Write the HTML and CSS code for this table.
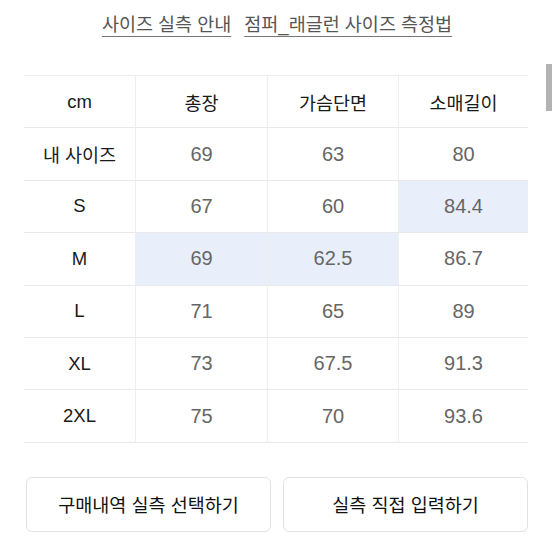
FILE: index.html
```html
<!DOCTYPE html>
<html lang="ko">
<head>
<meta charset="utf-8">
<link rel="stylesheet" href="styles.css">
</head>
<body>
<div class="page">
  <div class="links">
    <a class="link">사이즈 실측 안내</a>
    <a class="link">점퍼_래글런 사이즈 측정법</a>
  </div>
  <div class="table">
    <div class="cell head">cm</div>
    <div class="cell head">총장</div>
    <div class="cell head">가슴단면</div>
    <div class="cell head">소매길이</div>

    <div class="cell label">내 사이즈</div>
    <div class="cell">69</div>
    <div class="cell">63</div>
    <div class="cell">80</div>

    <div class="cell label">S</div>
    <div class="cell">67</div>
    <div class="cell">60</div>
    <div class="cell hl">84.4</div>

    <div class="cell label">M</div>
    <div class="cell hl">69</div>
    <div class="cell hl">62.5</div>
    <div class="cell">86.7</div>

    <div class="cell label">L</div>
    <div class="cell">71</div>
    <div class="cell">65</div>
    <div class="cell">89</div>

    <div class="cell label">XL</div>
    <div class="cell">73</div>
    <div class="cell">67.5</div>
    <div class="cell">91.3</div>

    <div class="cell label">2XL</div>
    <div class="cell">75</div>
    <div class="cell">70</div>
    <div class="cell">93.6</div>
  </div>
  <div class="buttons">
    <button class="btn">구매내역 실측 선택하기</button>
    <button class="btn">실측 직접 입력하기</button>
  </div>
</div>
<div class="scrollbar"></div>
</body>
</html>
```
FILE: styles.css
```css
html, body {
  margin: 0;
  padding: 0;
  background: #fff;
}
body {
  font-family: "Liberation Sans", "Noto Sans CJK KR", sans-serif;
  width: 553px;
  height: 553px;
  overflow: hidden;
  position: relative;
}
.page {
  padding: 11px 25px 0 24px;
}
.links {
  display: flex;
  justify-content: center;
  gap: 13px;
  padding-left: 2px;
}
.link {
  font-size: 18.5px;
  color: #555;
  text-decoration: underline;
  text-decoration-color: #777;
  text-underline-offset: 5px;
  text-decoration-thickness: 1px;
  line-height: 28px;
}
.table {
  margin-top: 36px;
  display: grid;
  grid-template-columns: 111px 132px 131px 130px;
  grid-auto-rows: 52.4px;
  border-top: 1px solid #eee;
}
.cell {
  display: flex;
  align-items: center;
  justify-content: center;
  font-size: 20px;
  color: #666;
  border-bottom: 1.5px solid #e9e9e9;
  border-left: 1px solid #eee;
}
.cell:nth-child(4n+1) {
  border-left: none;
}
.head, .label {
  color: #1a1a1a;
  font-size: 18.5px;
}
.hl {
  background: #e9eefb;
}
.buttons {
  margin-top: 34px;
  display: flex;
  gap: 12px;
  padding-left: 2px;
}
.btn {
  flex: 1;
  height: 55px;
  background: #fff;
  border: 1px solid #e2e2e2;
  border-radius: 6px;
  font-family: "Liberation Sans", "Noto Sans CJK KR", sans-serif;
  font-size: 18.5px;
  color: #111;
  padding: 0;
}
.scrollbar {
  position: absolute;
  left: 546px;
  top: 64px;
  width: 6px;
  height: 47px;
  background: #b3b3b3;
}
```
